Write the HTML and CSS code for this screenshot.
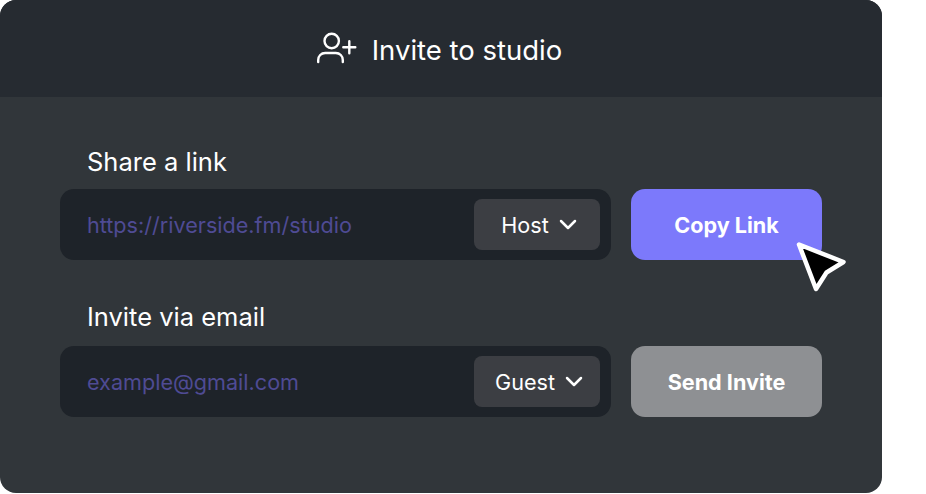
FILE: index.html
```html
<!DOCTYPE html>
<html lang="en">
<head>
    <meta charset="UTF-8">
    <meta name="viewport" content="width=device-width, initial-scale=1.0">
    <title>Invite to studio</title>
    <link rel="stylesheet" href="styles.css">
</head>
<body>
    <div class="card">
        <div class="card-header">
            <svg class="invite-icon" width="42" height="34" viewBox="0 0 42 34" fill="none" stroke="#fff" stroke-width="2.4" stroke-linecap="round" stroke-linejoin="round">
                <circle cx="15.7" cy="9" r="7.2"/>
                <path d="M2.2 30v-2c0-4 3-7 7-7h10.600c4 0 7 3 7 7v2"/>
                <path d="M33.300 9.300v12M27.300 15.300h12"/>
            </svg>
            <span class="card-title">Invite to studio</span>
        </div>
        <div class="card-body">
            <div class="field">
                <div class="field-label">Share a link</div>
                <div class="field-row">
                    <div class="input-box">
                        <span class="placeholder">https://riverside.fm/studio</span>
                        <div class="role-select">
                            <span>Host</span>
                            <svg width="18" height="11" viewBox="0 0 18 11" fill="none" stroke="#fff" stroke-width="2.5" stroke-linecap="round" stroke-linejoin="round"><path d="M2 2l7 7 7-7"/></svg>
                        </div>
                    </div>
                    <button class="action copy">Copy Link</button>
                </div>
            </div>
            <div class="field">
                <div class="field-label">Invite via email</div>
                <div class="field-row">
                    <div class="input-box">
                        <span class="placeholder">example@gmail.com</span>
                        <div class="role-select">
                            <span>Guest</span>
                            <svg width="18" height="11" viewBox="0 0 18 11" fill="none" stroke="#fff" stroke-width="2.5" stroke-linecap="round" stroke-linejoin="round"><path d="M2 2l7 7 7-7"/></svg>
                        </div>
                    </div>
                    <button class="action send">Send Invite</button>
                </div>
            </div>
        </div>
        <svg class="cursor" width="54" height="56" viewBox="0 0 54 56">
            <path d="M3 6.500L47.500 24 30.500 34.500 20 51Z" fill="#000" stroke="#fff" stroke-width="4.500" stroke-linejoin="round"/>
        </svg>
    </div>
</body>
</html>
```

FILE: styles.css
```css
body {
    margin: 0;
    background-color: #fff;
    font-family: Inter, "Liberation Sans", sans-serif;
}
.card {
    position: relative;
    width: 882px;
    height: 493px;
    border-radius: 16px;
    overflow: hidden;
    background-color: #31363a;
    color: #fff;
}
.card-header {
    height: 97px;
    display: flex;
    align-items: center;
    justify-content: center;
    gap: 14px;
    padding-right: 4px;
    box-sizing: border-box;
    background-color: #262b31;
    font-size: 27.5px;
}
.invite-icon {
    margin-top: 1px;
}
.card-title {
    padding-top: 2px;
}
.card-body {
    display: flex;
    flex-direction: column;
    gap: 42px;
    padding: 50px 60px 0;
}
.field-label {
    margin-left: 27px;
    margin-bottom: 11.5px;
    height: 30px;
    line-height: 30px;
    font-size: 25.5px;
}
.field:last-child .field-label {
    margin-bottom: 13.5px;
}
.field-row {
    display: flex;
    gap: 20px;
}
.input-box {
    width: 551px;
    height: 71.5px;
    box-sizing: border-box;
    display: flex;
    align-items: center;
    justify-content: space-between;
    padding: 0 11px 0 27px;
    border-radius: 14px;
    background-color: #1e2329;
}
.placeholder {
    padding-top: 2px;
    font-size: 21.6px;
    color: #4f4b94;
}
.role-select {
    width: 126px;
    height: 50.5px;
    box-sizing: border-box;
    display: flex;
    align-items: center;
    justify-content: center;
    gap: 10px;
    padding-left: 4px;
    border-radius: 8px;
    background-color: #3c3e43;
    font-size: 21.6px;
}
.role-select span {
    padding-top: 2px;
}
.action {
    width: 191px;
    height: 71.5px;
    padding: 2px 0 0;
    border: none;
    border-radius: 14px;
    font-family: inherit;
    font-size: 21.6px;
    font-weight: 700;
    color: #fff;
}
.copy {
    background-color: #7c79fb;
}
.send {
    background-color: #8e9093;
}
.cursor {
    position: absolute;
    left: 796px;
    top: 238px;
}
```
